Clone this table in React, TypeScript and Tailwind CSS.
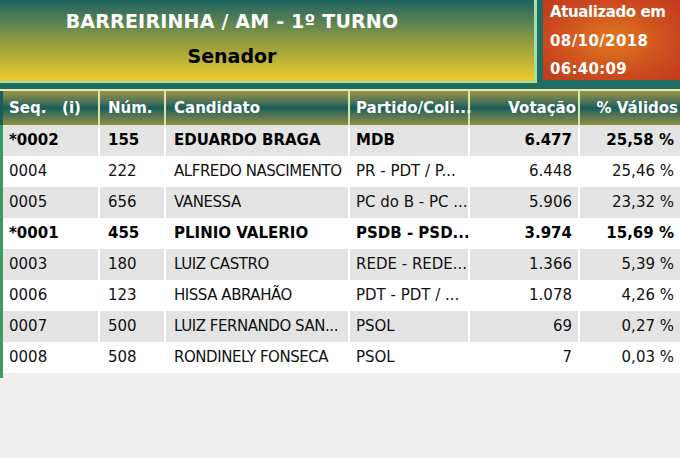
import React from "react";

type Row = {
  seq: string;
  num: string;
  nome: string;
  partido: string;
  votos: string;
  pct: string;
  eleito?: boolean;
};

const rows: Row[] = [
  { seq: "*0002", num: "155", nome: "EDUARDO BRAGA", partido: "MDB", votos: "6.477", pct: "25,58 %", eleito: true },
  { seq: "0004", num: "222", nome: "ALFREDO NASCIMENTO", partido: "PR - PDT / P...", votos: "6.448", pct: "25,46 %" },
  { seq: "0005", num: "656", nome: "VANESSA", partido: "PC do B - PC ...", votos: "5.906", pct: "23,32 %" },
  { seq: "*0001", num: "455", nome: "PLINIO VALERIO", partido: "PSDB - PSD...", votos: "3.974", pct: "15,69 %", eleito: true },
  { seq: "0003", num: "180", nome: "LUIZ CASTRO", partido: "REDE - REDE...", votos: "1.366", pct: "5,39 %" },
  { seq: "0006", num: "123", nome: "HISSA ABRAHÃO", partido: "PDT - PDT / ...", votos: "1.078", pct: "4,26 %" },
  { seq: "0007", num: "500", nome: "LUIZ FERNANDO SAN...", partido: "PSOL", votos: "69", pct: "0,27 %" },
  { seq: "0008", num: "508", nome: "RONDINELY FONSECA", partido: "PSOL", votos: "7", pct: "0,03 %" },
];

const cols = "grid grid-cols-[97px_66px_184px_120px_110px_100px]";

export default function App() {
  return (
    <div
      className="w-[680px] h-[458px] overflow-hidden bg-[#efefef] text-[15px] text-[#111]"
      style={{ fontFamily: "Tahoma, 'DejaVu Sans', Verdana, sans-serif" }}
    >
      <div className="flex bg-[#236b5e] pb-[6px]">
        <div className="w-[537px] h-[83px] pr-[70px] border-r-[3px] border-b-[2px] border-[#9fe0b0] bg-gradient-to-b from-[#17635e] via-[#8c9a3c] to-[#f1cb2a] flex flex-col items-center">
          <div className="mt-[7px] text-[19px] font-bold text-white tracking-[0.2px]">
            BARREIRINHA / AM - 1º TURNO
          </div>
          <div className="mt-[6px] text-[19px] font-bold text-black">Senador</div>
        </div>
        <div className="ml-[6px] flex-1 h-[80px] bg-[radial-gradient(ellipse_at_center,#e2781f_0%,#cc4a1e_65%,#bf3a1c_100%)] pl-[7px] text-white font-bold text-[15px] leading-[28.5px]">
          <div className="-mt-[2px] tracking-[-0.4px]">Atualizado em</div>
          <div className="tracking-[0.4px]">08/10/2018</div>
          <div className="tracking-[0.3px]">06:40:09</div>
        </div>
      </div>

      <div className="flex border-t-2 border-[#d7ecb8]">
        <div className="w-[3px] flex flex-col">
          <div className="h-[34px] bg-[#1c5e55]" />
          <div className="h-[253px] bg-[#3d9a63]" />
        </div>
        <div className="flex-1">
          <div className={`${cols} h-[34px] text-white font-bold bg-gradient-to-b from-[#9a9440] via-[#135e5a] to-[#8e913c]`}>
            <div className="flex items-center pl-[6px] border-r-2 border-[#d7e6a8] whitespace-pre">Seq.   (i)</div>
            <div className="flex items-center pl-[8px] border-r-2 border-[#d7e6a8]">Núm.</div>
            <div className="flex items-center pl-[8px] border-r-2 border-[#d7e6a8]">Candidato</div>
            <div className="flex items-center pl-[6px] border-r-2 border-[#d7e6a8]">Partido/Coli...</div>
            <div className="flex items-center justify-end pr-[2px] border-r-2 border-[#d7e6a8]">Votação</div>
            <div className="flex items-center justify-end pr-[2px]">% Válidos</div>
          </div>
          {rows.map((r, i) => (
            <div
              key={r.seq}
              className={`${cols} h-[31px] ${i % 2 === 0 ? "bg-[#e4e4e4]" : "bg-white"} ${r.eleito ? "font-bold text-black" : ""}`}
            >
              <div className="flex items-center pl-[6px] border-r-2 border-white">{r.seq}</div>
              <div className="flex items-center pl-[8px] border-r-2 border-white">{r.num}</div>
              <div className={`flex items-center pl-[8px] border-r-2 border-white whitespace-nowrap overflow-hidden ${r.eleito ? "" : "tracking-[-0.45px]"}`}>{r.nome}</div>
              <div className="flex items-center pl-[6px] border-r-2 border-white whitespace-nowrap overflow-hidden">{r.partido}</div>
              <div className="flex items-center justify-end pr-[6px] border-r-2 border-white">{r.votos}</div>
              <div className="flex items-center justify-end pr-[6px]">{r.pct}</div>
            </div>
          ))}
        </div>
      </div>
    </div>
  );
}
